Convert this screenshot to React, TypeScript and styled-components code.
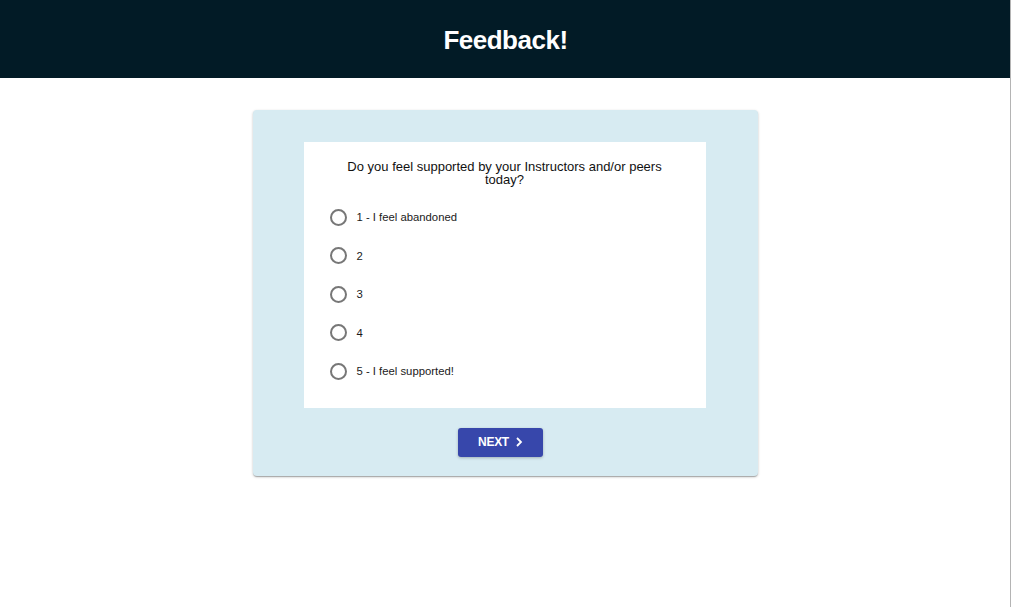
import React from "react";
import styled, { createGlobalStyle } from "styled-components";

const GlobalStyle = createGlobalStyle`
  html, body { margin: 0; padding: 0; background: #ffffff; }
  body { font-family: "Liberation Sans", Arial, Helvetica, sans-serif; }
  * { box-sizing: border-box; }
`;

const Page = styled.div`
  width: 1011px;
  height: 607px;
  border-right: 1px solid #b4b4b4;
  display: flex;
  flex-direction: column;
  align-items: center;
`;

const Header = styled.header`
  width: 100%;
  height: 78px;
  background: #021b26;
  display: flex;
  align-items: center;
  justify-content: center;
`;

const Title = styled.h1`
  margin: 0;
  color: #ffffff;
  font-size: 26px;
  font-weight: 700;
  letter-spacing: -0.5px;
  padding-left: 1px;
  padding-top: 2px;
`;

const Card = styled.section`
  margin-top: 32px;
  width: 505px;
  background: #d7ebf2;
  border-radius: 4px;
  box-shadow: 0 1px 3px rgba(0, 0, 0, 0.2), 0 1px 1px rgba(0, 0, 0, 0.14),
    0 2px 1px -1px rgba(0, 0, 0, 0.12);
  padding: 32px 52px 19px 51px;
  display: flex;
  flex-direction: column;
  align-items: center;
`;

const Panel = styled.div`
  width: 402px;
  background: #ffffff;
  padding: 18px 26px 17px 26px;
  display: flex;
  flex-direction: column;
`;

const Question = styled.p`
  margin: 0 0 12px;
  text-align: center;
  font-size: 13px;
  line-height: 13px;
  color: #111111;
`;

const Options = styled.div`
  display: flex;
  flex-direction: column;
`;

const Option = styled.label`
  height: 38.5px;
  display: flex;
  align-items: center;
  gap: 10px;
  cursor: pointer;
`;

const Circle = styled.span`
  width: 17px;
  height: 17px;
  border-radius: 50%;
  border: 2px solid #777777;
  flex: none;
`;

const Label = styled.span`
  font-size: 11.3px;
  color: #1a1a1a;
`;

const NextButton = styled.button`
  margin-top: 20px;
  margin-right: 9px;
  width: 85px;
  height: 29px;
  border: none;
  border-radius: 3px;
  background: #3747ab;
  color: #ffffff;
  font-family: "Liberation Sans", Arial, sans-serif;
  font-weight: 700;
  font-size: 12px;
  letter-spacing: -0.3px;
  display: flex;
  align-items: center;
  justify-content: center;
  gap: 6px;
  box-shadow: 0 1px 3px rgba(0, 0, 0, 0.25);
  padding: 0 0 0 1px;
`;

const options = ["1 - I feel abandoned", "2", "3", "4", "5 - I feel supported!"];

export default function App() {
  return (
    <>
      <GlobalStyle />
      <Page>
        <Header>
          <Title>Feedback!</Title>
        </Header>
        <Card>
          <Panel>
            <Question>
              Do you feel supported by your Instructors and/or peers
              <br />
              today?
            </Question>
            <Options>
              {options.map((o) => (
                <Option key={o}>
                  <Circle />
                  <Label>{o}</Label>
                </Option>
              ))}
            </Options>
          </Panel>
          <NextButton>
            NEXT
            <svg width="8" height="10" viewBox="0 0 8 10">
              <path d="M2 1l4 4-4 4" fill="none" stroke="#fff" strokeWidth="1.8" />
            </svg>
          </NextButton>
        </Card>
      </Page>
    </>
  );
}
